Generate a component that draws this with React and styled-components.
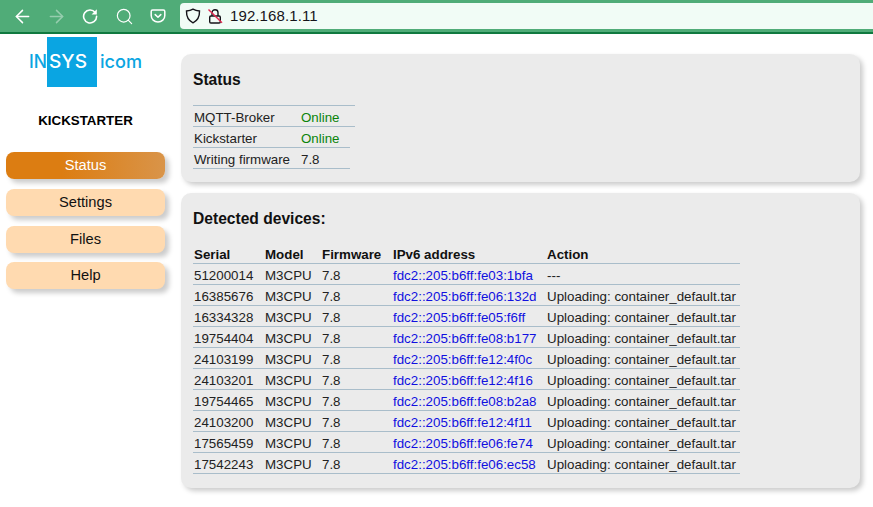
import React from "react";
import styled, { createGlobalStyle } from "styled-components";
import { ArrowLeft, ArrowRight, Search } from "lucide-react";

const devices = [
  ["51200014", "fdc2::205:b6ff:fe03:1bfa", "---"],
  ["16385676", "fdc2::205:b6ff:fe06:132d", "Uploading: container_default.tar"],
  ["16334328", "fdc2::205:b6ff:fe05:f6ff", "Uploading: container_default.tar"],
  ["19754404", "fdc2::205:b6ff:fe08:b177", "Uploading: container_default.tar"],
  ["24103199", "fdc2::205:b6ff:fe12:4f0c", "Uploading: container_default.tar"],
  ["24103201", "fdc2::205:b6ff:fe12:4f16", "Uploading: container_default.tar"],
  ["19754465", "fdc2::205:b6ff:fe08:b2a8", "Uploading: container_default.tar"],
  ["24103200", "fdc2::205:b6ff:fe12:4f11", "Uploading: container_default.tar"],
  ["17565459", "fdc2::205:b6ff:fe06:fe74", "Uploading: container_default.tar"],
  ["17542243", "fdc2::205:b6ff:fe06:ec58", "Uploading: container_default.tar"]
];

const GlobalStyle = createGlobalStyle`
  html, body {
    margin: 0;
    background: #fff;
    font-family: "Liberation Sans", Arial, sans-serif;
    overflow: hidden;
  }
`;

const Page = styled.div`
  width: 873px;
  height: 507px;
`;

// Browser chrome on top
const Toolbar = styled.div`
  display: flex;
  align-items: center;
  height: 32px;
  padding-left: 5px;
  background: #50ac78;
  border-bottom: 2px solid #10793f;
`;

const ToolButton = styled.div`
  display: flex;
  justify-content: center;
  align-items: center;
  width: 34px;
  height: 32px;
  color: #fff;
  opacity: ${props => (props.$disabled ? 0.4 : 1)};
`;

const UrlBar = styled.div`
  display: flex;
  align-items: center;
  flex: 1;
  height: 26px;
  margin-left: 5px;
  padding-left: 5px;
  background: #f1fcf6;
  border-radius: 4px 0 0 4px;
  color: #15141a;
  font-size: 15px;
`;

const UrlIcon = styled.svg`
  flex: none;
  margin-right: 6px;
`;

const UrlText = styled.span`
  margin-left: 1px;
  margin-top: -1px;
  letter-spacing: 0.1px;
`;

const Body = styled.div`
  display: flex;
  align-items: flex-start;
`;

const Sidebar = styled.nav`
  width: 159px;
  margin-left: 6px;
  flex: none;
`;

const LogoBox = styled.div`
  height: 55px;
  padding: 3px 0 0 23px;
`;

const AppName = styled.div`
  margin-top: 21px;
  margin-bottom: 23.3px;
  text-align: center;
  font-size: 13.33px;
  font-weight: 700;
  line-height: 16px;
  color: #000;
`;

const NavList = styled.div`
  display: flex;
  flex-direction: column;
  gap: 9.7px;
`;

const NavButton = styled.div`
  height: 27px;
  line-height: 27px;
  text-align: center;
  font-size: 14.67px;
  border-radius: 8px;
  color: ${props => (props.$active ? "#fff" : "#111")};
  background: ${props =>
    props.$active
      ? "linear-gradient(90deg, #dc7d12 0%, #dc7d12 35%, #d99449 100%)"
      : "#ffdab0"};
  box-shadow: 4px 4px 5px #ccc;
`;

const Main = styled.main`
  display: flex;
  flex-direction: column;
  gap: 11px;
  width: 679px;
  margin-left: 16px;
  padding-top: 20px;
`;

const Panel = styled.section`
  box-sizing: border-box;
  height: ${props => props.$height}px;
  padding: 17px 12px 0;
  background: #ebebeb;
  border-radius: 10px;
  box-shadow: 3px 3px 5px #ccc;
`;

const Title = styled.h2`
  margin: 0;
  font-size: 15.6px;
  font-weight: 700;
  line-height: 18px;
  color: #111;
`;

const StatusList = styled.div`
  margin-top: 16px;
  border-top: 1px solid #a9bdca;
  width: 162px;
`;

const StatusRow = styled.div`
  display: grid;
  grid-template-columns: 107px auto;
  grid-template-rows: 18px;
  width: ${props => (props.$wide ? 162 : 157)}px;
  height: 21px;
  padding: 2px 0 0 1px;
  box-sizing: border-box;
  line-height: 20px;
  font-size: 13.33px;
  color: #222;
  border-bottom: 1px solid #a9bdca;
`;

const Online = styled.span`
  color: #0a840a;
`;

const DeviceTable = styled.table`
  width: 547px;
  margin-top: 15px;
  border-collapse: collapse;
  font-size: 13.33px;
  color: #222;

  th, td {
    height: 17px;
    padding: 3px 0 0 1px;
    text-align: left;
    line-height: 17px;
    border-bottom: 1px solid #a9bdca;
    white-space: nowrap;
  }

  th {
    font-weight: 700;
    color: #111;
  }
`;

const Address = styled.a`
  color: #1010e0;
  text-decoration: none;
`;

function ReloadIcon() {
  return (
    <svg width="16" height="16" viewBox="0 0 16 16" fill="none">
      <path d="M13.2 4.4 A6.5 6.5 0 1 0 14.6 8.4" stroke="#fff" strokeWidth="1.6" strokeLinecap="round" />
      <path d="M14.8 1.2 V6.4 H9.6 Z" fill="#fff" />
    </svg>
  );
}

function ShieldIcon() {
  return (
    <UrlIcon width="16" height="16" viewBox="0 0 16 16" fill="none" stroke="#15141a" strokeWidth="1.4">
      <path d="M8 1.2 C10 2.4 12.4 2.9 14.5 3 C14.7 8.5 12.5 12.6 8 14.8 C3.5 12.6 1.3 8.5 1.5 3 C3.6 2.9 6 2.4 8 1.2 Z" />
    </UrlIcon>
  );
}

function BrokenLockIcon() {
  return (
    <UrlIcon width="16" height="16" viewBox="0 0 16 16" fill="none" strokeWidth="1.4">
      <path d="M5 8 V4.5 C5 0.8 11 0.8 11 4.5 V8" stroke="#15141a" />
      <rect x="2.7" y="8" width="10.6" height="7" rx="1.2" stroke="#15141a" />
      <path d="M1.5 1.5 L15 14.8" stroke="#e22850" />
    </UrlIcon>
  );
}

function PocketIcon() {
  return (
    <svg width="16" height="16" viewBox="0 0 16 16" fill="none" stroke="#fff" strokeWidth="1.5" strokeLinecap="round" strokeLinejoin="round">
      <path d="M2.6 2 H13.4 C14.2 2 14.8 2.6 14.8 3.4 V7.4 C14.8 11.2 11.8 14 8 14 C4.2 14 1.2 11.2 1.2 7.4 V3.4 C1.2 2.6 1.8 2 2.6 2 Z" />
      <path d="M5.2 6.6 L8 9.2 L10.8 6.6" />
    </svg>
  );
}

// Logo wordmark, placed over the blue square
function Logo() {
  const word = { fontFamily: "Inter, sans-serif", fontSize: 18, fontWeight: 500, lengthAdjust: "spacingAndGlyphs" };
  return (
    <svg width="116" height="50" viewBox="0 0 116 50" style={{ display: "block" }}>
      <rect x="18" y="0" width="50" height="50" fill="#0aa5e2" />
      <text x="0" y="31" textLength="18" fill="#0aa5e2" {...word}>IN</text>
      <text x="20" y="31" textLength="38" fill="#fff" {...word}>SYS</text>
      <text x="71" y="31" textLength="42" fill="#0aa5e2" {...word}>icom</text>
    </svg>
  );
}

export default function App() {
  return (
    <Page>
      <GlobalStyle />
      <Toolbar>
        <ToolButton><ArrowLeft size={21} strokeWidth={1.7} /></ToolButton>
        <ToolButton $disabled><ArrowRight size={21} strokeWidth={1.7} /></ToolButton>
        <ToolButton><ReloadIcon /></ToolButton>
        <ToolButton><Search size={19} strokeWidth={1.5} /></ToolButton>
        <ToolButton><PocketIcon /></ToolButton>
        <UrlBar>
          <ShieldIcon />
          <BrokenLockIcon />
          <UrlText>192.168.1.11</UrlText>
        </UrlBar>
      </Toolbar>
      <Body>
        <Sidebar>
          <LogoBox><Logo /></LogoBox>
          <AppName>KICKSTARTER</AppName>
          <NavList>
            <NavButton $active>Status</NavButton>
            <NavButton>Settings</NavButton>
            <NavButton>Files</NavButton>
            <NavButton>Help</NavButton>
          </NavList>
        </Sidebar>
        <Main>
          <Panel $height={128}>
            <Title>Status</Title>
            <StatusList>
              <StatusRow $wide><span>MQTT-Broker</span><Online>Online</Online></StatusRow>
              <StatusRow><span>Kickstarter</span><Online>Online</Online></StatusRow>
              <StatusRow><span>Writing firmware</span><span>7.8</span></StatusRow>
            </StatusList>
          </Panel>
          <Panel $height={295}>
            <Title>Detected devices:</Title>
            <DeviceTable>
              <colgroup>
                <col width="71" />
                <col width="57" />
                <col width="71" />
                <col width="154" />
                <col />
              </colgroup>
              <thead>
                <tr>
                  <th>Serial</th>
                  <th>Model</th>
                  <th>Firmware</th>
                  <th>IPv6 address</th>
                  <th>Action</th>
                </tr>
              </thead>
              <tbody>
                {devices.map(([serial, address, action]) => (
                  <tr key={serial}>
                    <td>{serial}</td>
                    <td>M3CPU</td>
                    <td>7.8</td>
                    <td><Address href="#">{address}</Address></td>
                    <td>{action}</td>
                  </tr>
                ))}
              </tbody>
            </DeviceTable>
          </Panel>
        </Main>
      </Body>
    </Page>
  );
}
